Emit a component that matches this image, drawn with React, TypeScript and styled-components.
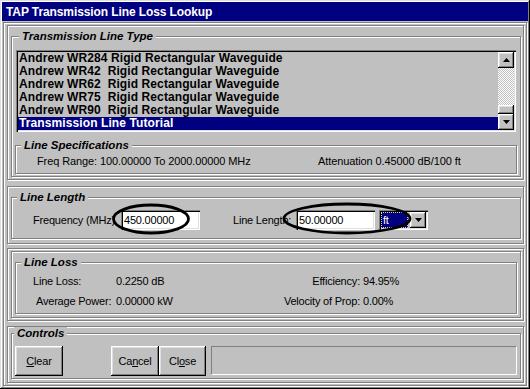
import React from 'react';
import styled, { createGlobalStyle, css } from 'styled-components';

const GlobalStyle = createGlobalStyle`
  html, body {
    margin: 0;
    padding: 0;
    background: #c0c0c0;
  }
  body {
    font-family: 'Liberation Sans', Arial, sans-serif;
    font-size: 11px;
    color: #000;
  }
`;

// gray line with a white line beside it, the classic etched frame
const etched = css`
  box-sizing: border-box;
  border: 1px solid #808080;
  box-shadow: inset 1px 1px 0 #fff, 1px 1px 0 #fff;
`;

const raised = css`
  box-shadow: inset -1px -1px 0 #000, inset 1px 1px 0 #fff,
    inset -2px -2px 0 #808080, inset 2px 2px 0 #dfdfdf;
`;

const sunken = css`
  box-shadow: inset 1px 1px 0 #808080, inset 2px 2px 0 #000,
    inset -1px -1px 0 #fff, inset -2px -2px 0 #dfdfdf;
`;

const Window = styled.div`
  position: relative;
  box-sizing: border-box;
  width: 530px;
  height: 389px;
  padding: 2px;
  background: #c0c0c0;
  box-shadow: inset -1px -1px 0 #000, inset 1px 1px 0 #dfdfdf,
    inset -2px -2px 0 #808080, inset 2px 2px 0 #fff;
  display: flex;
  flex-direction: column;
`;

const TitleBar = styled.div`
  height: 19px;
  line-height: 20px;
  padding-left: 4px;
  background: #000080;
  color: #fff;
  font-weight: bold;
  font-size: 12px;
  letter-spacing: -0.1px;
  white-space: nowrap;
`;

const ClientFrame = styled.div`
  ${etched};
  margin: 1px 1px 0 1px;
  height: 364px;
  padding: 2px 2px 0 3px;
  display: flex;
  flex-direction: column;
`;

const Section = styled.div<{ $h: number; $mt: number; $pt: number }>`
  ${etched};
  height: ${(p) => p.$h}px;
  margin-top: ${(p) => p.$mt}px;
  padding: ${(p) => p.$pt}px 2px 0 3px;
`;

const GroupBox = styled.div<{ $h: number; $mt?: number; $pt: number; $pl: number; $w?: number; $ml?: number }>`
  ${etched};
  position: relative;
  height: ${(p) => p.$h}px;
  margin-top: ${(p) => p.$mt ?? 0}px;
  margin-left: ${(p) => p.$ml ?? 0}px;
  width: ${(p) => (p.$w ? `${p.$w}px` : 'auto')};
  padding: ${(p) => p.$pt}px 2px 0 ${(p) => p.$pl}px;
`;

const Legend = styled.span<{ $left: number }>`
  position: absolute;
  top: -7px;
  left: ${(p) => p.$left}px;
  padding: 0 3px;
  background: #c0c0c0;
  font-weight: bold;
  font-style: italic;
  font-size: 11.5px;
  line-height: 13px;
  white-space: nowrap;
`;

const ListBox = styled.div`
  box-sizing: border-box;
  width: 500px;
  height: 82px;
  padding: 2px;
  ${sunken};
  display: flex;
`;

const ListItems = styled.div`
  flex: 1;
  overflow: hidden;
`;

const ListItem = styled.div<{ $selected?: boolean }>`
  height: 13px;
  line-height: 13px;
  padding-left: 1px;
  font-weight: bold;
  font-size: 12px;
  letter-spacing: 0.1px;
  white-space: pre;
  background: ${(p) => (p.$selected ? '#000080' : 'transparent')};
  color: ${(p) => (p.$selected ? '#fff' : '#000')};
`;

const ScrollBar = styled.div`
  width: 16px;
  display: flex;
  flex-direction: column;
`;

const ScrollButton = styled.div`
  box-sizing: border-box;
  width: 16px;
  height: 16px;
  background: #c0c0c0;
  ${raised};
  display: flex;
  align-items: center;
  justify-content: center;
`;

const Track = styled.div`
  flex: 1;
  display: flex;
  flex-direction: column;
  justify-content: flex-end;
  background: repeating-conic-gradient(#fff 0 25%, #c0c0c0 0 50%) 0 0 / 2px 2px;
`;

const Thumb = styled.div`
  height: 9px;
  background: #c0c0c0;
  ${raised};
`;

const SpecRow = styled.div`
  display: grid;
  grid-template-columns: 281px auto;
  padding-left: 21px;
  line-height: 13px;
  white-space: nowrap;
  letter-spacing: -0.1px;
`;

const FieldRow = styled.div`
  display: flex;
  align-items: center;
  height: 20px;
  padding-left: 21px;
  white-space: nowrap;
  letter-spacing: -0.2px;
`;

const FieldLabel = styled.span<{ $w: number; $ml?: number }>`
  width: ${(p) => p.$w}px;
  margin-left: ${(p) => p.$ml ?? 0}px;
`;

const TextInput = styled.div`
  box-sizing: border-box;
  width: 79px;
  height: 20px;
  padding: 0 0 0 3px;
  line-height: 20px;
  background: #fff;
  ${sunken};
`;

const Combo = styled.div`
  box-sizing: border-box;
  width: 49px;
  height: 20px;
  margin-left: 4px;
  padding: 2px;
  ${sunken};
  display: flex;
  gap: 2px;
`;

const ComboValue = styled.div`
  flex: 1;
  box-sizing: border-box;
  border: 1px dotted #d8d890;
  background: #000080;
  color: #fff;
  line-height: 14px;
  padding-left: 1px;
`;

const ComboButton = styled(ScrollButton)`
  height: 16px;
`;

const LossGrid = styled.div`
  display: grid;
  grid-template-columns: 83px 150px 94px auto;
  row-gap: 7px;
  padding-left: 17px;
  line-height: 13px;
  white-space: nowrap;
  letter-spacing: -0.2px;
`;

const Cell = styled.span<{ $right?: boolean; $indent?: number }>`
  text-align: ${(p) => (p.$right ? 'right' : 'left')};
  padding-left: ${(p) => p.$indent ?? 0}px;
`;

const ButtonRow = styled.div`
  display: flex;
  align-items: flex-start;
`;

const Button = styled.div<{ $w: number; $ml?: number }>`
  box-sizing: border-box;
  width: ${(p) => p.$w}px;
  height: 30px;
  margin-left: ${(p) => p.$ml ?? 0}px;
  background: #c0c0c0;
  ${raised};
  display: flex;
  align-items: center;
  justify-content: center;
  letter-spacing: -0.2px;
  u {
    text-decoration: underline;
  }
`;

const StatusPanel = styled.div`
  box-sizing: border-box;
  width: 306px;
  height: 29px;
  margin-left: 5px;
  border: 1px solid;
  border-color: #808080 #fff #fff #808080;
`;

const Annotations = styled.svg`
  position: absolute;
  left: 0;
  top: 0;
  pointer-events: none;
`;

const UpArrow = () => (
  <svg width="7" height="4" viewBox="0 0 7 4">
    <path d="M3.5 0 L7 4 L0 4 Z" fill="#000" />
  </svg>
);

const DownArrow = () => (
  <svg width="7" height="4" viewBox="0 0 7 4">
    <path d="M0 0 L7 0 L3.5 4 Z" fill="#000" />
  </svg>
);

const lineTypes = [
  'Andrew WR284 Rigid Rectangular Waveguide',
  'Andrew WR42  Rigid Rectangular Waveguide',
  'Andrew WR62  Rigid Rectangular Waveguide',
  'Andrew WR75  Rigid Rectangular Waveguide',
  'Andrew WR90  Rigid Rectangular Waveguide',
  'Transmission Line Tutorial',
];

export default function App() {
  return (
    <>
      <GlobalStyle />
      <Window>
        <TitleBar>TAP Transmission Line Loss Lookup</TitleBar>
        <ClientFrame>
          <Section $h={155} $mt={0} $pt={10}>
            <GroupBox $h={141} $pt={13} $pl={4}>
              <Legend $left={7}>Transmission Line Type</Legend>
              <ListBox>
                <ListItems>
                  {lineTypes.map((t, i) => (
                    <ListItem key={t} $selected={i === lineTypes.length - 1}>
                      {t}
                    </ListItem>
                  ))}
                </ListItems>
                <ScrollBar>
                  <ScrollButton>
                    <UpArrow />
                  </ScrollButton>
                  <Track>
                    <Thumb />
                  </Track>
                  <ScrollButton>
                    <DownArrow />
                  </ScrollButton>
                </ScrollBar>
              </ListBox>
              <GroupBox $h={29} $mt={13} $pt={9} $pl={0} $w={502} $ml={-1}>
                <Legend $left={5}>Line Specifications</Legend>
                <SpecRow>
                  <span>Freq Range: 100.00000 To 2000.00000 MHz</span>
                  <span>Attenuation 0.45000 dB/100 ft</span>
                </SpecRow>
              </GroupBox>
            </GroupBox>
          </Section>

          <Section $h={58} $mt={6} $pt={10}>
            <GroupBox $h={42} $pt={12} $pl={0}>
              <Legend $left={5}>Line Length</Legend>
              <FieldRow>
                <FieldLabel $w={88}>Frequency (MHz)</FieldLabel>
                <TextInput>450.00000</TextInput>
                <FieldLabel $w={63} $ml={33}>Line Length:</FieldLabel>
                <TextInput>50.00000</TextInput>
                <Combo>
                  <ComboValue>ft</ComboValue>
                  <ComboButton>
                    <DownArrow />
                  </ComboButton>
                </Combo>
              </FieldRow>
            </GroupBox>
          </Section>

          <Section $h={73} $mt={4} $pt={2}>
            <GroupBox $h={67} $pt={10} $pl={3}>
              <GroupBox $h={52} $pt={12} $pl={0} $w={502}>
                <Legend $left={5}>Line Loss</Legend>
                <LossGrid>
                  <Cell>Line Loss:</Cell>
                  <Cell>0.2250 dB</Cell>
                  <Cell $right>Efficiency:</Cell>
                  <Cell $indent={3}>94.95%</Cell>
                  <Cell $indent={3}>Average Power:</Cell>
                  <Cell>0.00000 kW</Cell>
                  <Cell $right>Velocity of Prop:</Cell>
                  <Cell $indent={3}>0.00%</Cell>
                </LossGrid>
              </GroupBox>
            </GroupBox>
          </Section>

          <Section $h={57} $mt={5} $pt={6}>
            <GroupBox $h={46} $pt={12} $pl={3}>
              <Legend $left={2}>Controls</Legend>
              <ButtonRow>
                <Button $w={48}>
                  <span>
                    <u>C</u>lear
                  </span>
                </Button>
                <Button $w={48} $ml={48}>
                  <span>
                    Ca<u>n</u>cel
                  </span>
                </Button>
                <Button $w={47}>
                  <span>
                    Cl<u>o</u>se
                  </span>
                </Button>
                <StatusPanel />
              </ButtonRow>
            </GroupBox>
          </Section>
        </ClientFrame>

        <Annotations width="530" height="389" viewBox="0 0 530 389">
          <ellipse cx="151" cy="219" rx="37.5" ry="14" fill="none" stroke="#000" strokeWidth="2.8" />
          <ellipse cx="347" cy="218.5" rx="63" ry="14.5" fill="none" stroke="#000" strokeWidth="2.8" />
        </Annotations>
      </Window>
    </>
  );
}
